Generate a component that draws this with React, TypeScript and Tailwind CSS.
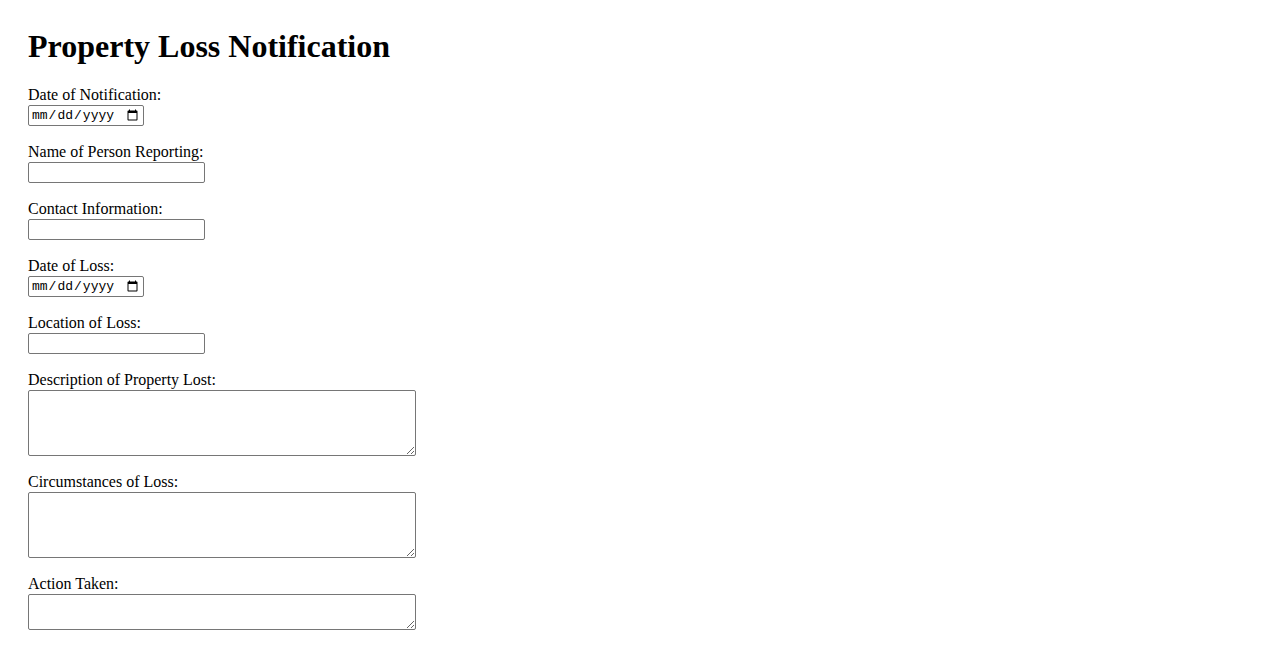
import React from "react"

const serif = "font-['Liberation_Serif','Times_New_Roman',serif]"
const box = "block border border-[#767676] rounded-[2px] bg-white"

function Field({ label, children, gap = "mb-[17px]" }: { label: string; children: React.ReactNode; gap?: string }) {
  return (
    <div className={gap}>
      <label className="block h-[18px] text-[16px] leading-[18px] text-black">{label}</label>
      <div className="mt-[1px]">{children}</div>
    </div>
  )
}

function DateInput() {
  return (
    <input
      type="date"
      className={`${box} w-[116px] h-[21px] px-[2px] text-[13px] font-['Liberation_Mono',monospace] text-black`}
    />
  )
}

function TextInput() {
  return <input type="text" className={`${box} w-[177px] h-[21px] px-[2px] text-[13px]`} />
}

function Area({ h }: { h: string }) {
  return <textarea className={`${box} w-[388px] ${h} text-[13px]`} />
}

export default function App() {
  return (
    <div className={`min-h-screen bg-white pl-[28px] pt-[28px] ${serif} text-black`}>
      <h1 className="text-[32px] leading-[37px] font-bold mb-[21px]">Property Loss Notification</h1>
      <form className="flex flex-col">
        <Field label="Date of Notification:"><DateInput /></Field>
        <Field label="Name of Person Reporting:"><TextInput /></Field>
        <Field label="Contact Information:"><TextInput /></Field>
        <Field label="Date of Loss:"><DateInput /></Field>
        <Field label="Location of Loss:"><TextInput /></Field>
        <Field label="Description of Property Lost:"><Area h="h-[66px]" /></Field>
        <Field label="Circumstances of Loss:"><Area h="h-[66px]" /></Field>
        <Field label="Action Taken:" gap=""><Area h="h-[36px]" /></Field>
      </form>
    </div>
  )
}
